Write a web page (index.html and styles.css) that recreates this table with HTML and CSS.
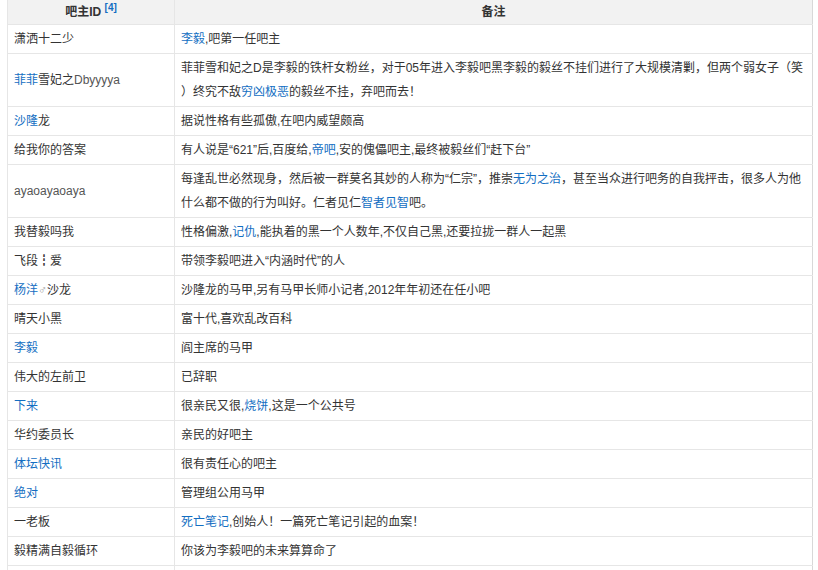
FILE: index.html
```html
<!DOCTYPE html>
<html lang="zh">
<head>
<meta charset="utf-8">
<title>吧主</title>
<link rel="stylesheet" href="styles.css">
</head>
<body>
<table class="tbl">
  <thead>
    <tr>
      <th class="c1">吧主ID <sup class="ref">[4]</sup></th>
      <th class="c2">备注</th>
    </tr>
  </thead>
  <tbody>
    <tr><td>潇洒十二少</td><td><a class="lk">李毅</a>,吧第一任吧主</td></tr>
    <tr><td><a class="lk">菲菲</a>雪妃之<span class="lat">Dbyyyya</span></td><td>菲菲雪和妃之D是李毅的铁杆女粉丝，对于05年进入李毅吧黑李毅的毅丝不挂们进行了大规模清剿，但两个弱女子（笑）终究不敌<a class="lk">穷凶极恶</a>的毅丝不挂，弃吧而去！</td></tr>
    <tr><td><a class="lk">沙隆</a>龙</td><td>据说性格有些孤傲,在吧内威望颇高</td></tr>
    <tr><td>给我你的答案</td><td>有人说是“621”后,百度给,<a class="lk">帝吧</a>,安的傀儡吧主,最终被毅丝们“赶下台”</td></tr>
    <tr><td><span class="lat">ayaoayaoaya</span></td><td>每逢乱世必然现身，然后被一群莫名其妙的人称为“仁宗”，推崇<a class="lk">无为之治</a>，甚至当众进行吧务的自我抨击，很多人为他什么都不做的行为叫好。仁者见仁<a class="lk">智者见智</a>吧。</td></tr>
    <tr><td>我替毅吗我</td><td>性格偏激,<a class="lk">记仇</a>,能执着的黑一个人数年,不仅自己黑,还要拉拢一群人一起黑</td></tr>
    <tr><td>飞段┇爱</td><td>带领李毅吧进入“内涵时代”的人</td></tr>
    <tr><td><a class="lk">杨洋</a><span class="sym">♂</span>沙龙</td><td>沙隆龙的马甲,另有马甲长师小记者,2012年年初还在任小吧</td></tr>
    <tr><td>晴天小黑</td><td>富十代,喜欢乱改百科</td></tr>
    <tr><td><a class="lk">李毅</a></td><td>阎主席的马甲</td></tr>
    <tr><td>伟大的左前卫</td><td>已辞职</td></tr>
    <tr><td><a class="lk">下来</a></td><td>很亲民又很,<a class="lk">烧饼</a>,这是一个公共号</td></tr>
    <tr><td>华约委员长</td><td>亲民的好吧主</td></tr>
    <tr><td><a class="lk">体坛快讯</a></td><td>很有责任心的吧主</td></tr>
    <tr><td><a class="lk">绝对</a></td><td>管理组公用马甲</td></tr>
    <tr><td>一老板</td><td><a class="lk">死亡笔记</a>,创始人！一篇死亡笔记引起的血案！</td></tr>
    <tr><td>毅精满自毅循环</td><td>你该为李毅吧的未来算算命了</td></tr>
    <tr><td>&nbsp;</td><td>&nbsp;</td></tr>
  </tbody>
</table>
</body>
</html>
```
FILE: styles.css
```css
html, body {
  margin: 0;
  padding: 0;
  background: #fff;
}

body {
  font-family: "Liberation Sans", "Noto Sans CJK SC", sans-serif;
  font-size: 12px;
  color: #333;
}

.tbl {
  border-collapse: collapse;
  margin: 0 0 0 7px;
  width: 806px;
  table-layout: fixed;
  border-left: 1px solid #e2e2e2;
  border-right: 1px solid #d8d8d8;
}

.tbl th {
  background: #f2f2f2;
  font-weight: bold;
  color: #333;
  text-align: center;
  height: 24px;
  padding: 0 6px;
  line-height: 24px;
  border-bottom: 1px solid #e6e6e6;
  border-left: 1px solid #e6e6e6;
}

.tbl th.c1 {
  width: 154px;
}

.tbl td {
  padding: 2px 6px;
  line-height: 24px;
  border-bottom: 1px solid #e6e6e6;
  border-left: 1px solid #e6e6e6;
  vertical-align: middle;
  line-break: anywhere;
}

.lk {
  color: #136ec2;
  text-decoration: none;
}

.ref {
  color: #136ec2;
  font-size: 10px;
  font-weight: bold;
  vertical-align: top;
  line-height: 12px;
  position: relative;
  top: 2px;
}

.lat {
  color: #555;
}

.sym {
  color: #999;
}
```
